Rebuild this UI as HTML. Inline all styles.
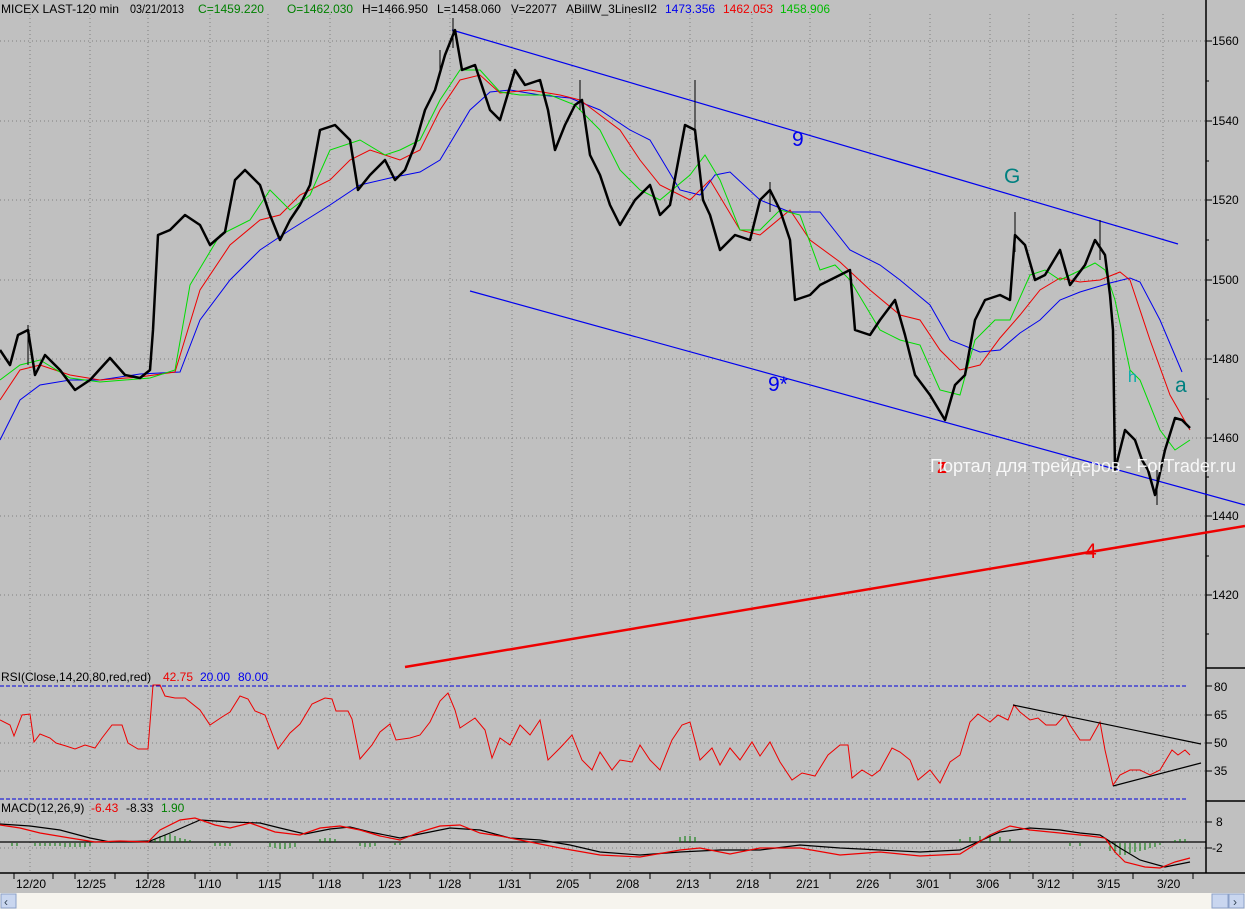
<!DOCTYPE html>
<html><head><meta charset="utf-8"><style>
html,body{margin:0;padding:0;background:#c0c0c0;}
#w{position:relative;width:1245px;height:909px;overflow:hidden;background:#c0c0c0;font-family:"Liberation Sans",sans-serif;}
svg text{font-family:"Liberation Sans","DejaVu Sans",sans-serif;}
</style></head><body><div id="w">
<svg width="1245" height="909" viewBox="0 0 1245 909" xmlns="http://www.w3.org/2000/svg">
<rect width="1245" height="909" fill="#c0c0c0"/>
<g stroke="#808080" stroke-dasharray="1,3" stroke-width="1">
<line x1="0" y1="41" x2="1206" y2="41"/><line x1="0" y1="121" x2="1206" y2="121"/><line x1="0" y1="200" x2="1206" y2="200"/><line x1="0" y1="280" x2="1206" y2="280"/><line x1="0" y1="359" x2="1206" y2="359"/><line x1="0" y1="438" x2="1206" y2="438"/><line x1="0" y1="516" x2="1206" y2="516"/><line x1="0" y1="595" x2="1206" y2="595"/>
<line x1="0" y1="715" x2="1206" y2="715"/><line x1="0" y1="743" x2="1206" y2="743"/><line x1="0" y1="771" x2="1206" y2="771"/>
<line x1="0" y1="822" x2="1206" y2="822"/><line x1="0" y1="848" x2="1206" y2="848"/>
<line x1="30" y1="14" x2="30" y2="873"/><line x1="90" y1="14" x2="90" y2="873"/><line x1="148" y1="14" x2="148" y2="873"/><line x1="210" y1="14" x2="210" y2="873"/><line x1="268" y1="14" x2="268" y2="873"/><line x1="330" y1="14" x2="330" y2="873"/><line x1="390" y1="14" x2="390" y2="873"/><line x1="450" y1="14" x2="450" y2="873"/><line x1="512" y1="14" x2="512" y2="873"/><line x1="572" y1="14" x2="572" y2="873"/><line x1="630" y1="14" x2="630" y2="873"/><line x1="690" y1="14" x2="690" y2="873"/><line x1="752" y1="14" x2="752" y2="873"/><line x1="810" y1="14" x2="810" y2="873"/><line x1="870" y1="14" x2="870" y2="873"/><line x1="930" y1="14" x2="930" y2="873"/><line x1="990" y1="14" x2="990" y2="873"/><line x1="1029" y1="14" x2="1029" y2="873"/><line x1="1073" y1="14" x2="1073" y2="873"/><line x1="1116" y1="14" x2="1116" y2="873"/><line x1="1163" y1="14" x2="1163" y2="873"/>
</g>
<g stroke="#000" stroke-width="1.5">
<line x1="1206" y1="0" x2="1206" y2="873"/>
<line x1="0" y1="873" x2="1245" y2="873"/>
<line x1="1206" y1="668" x2="1245" y2="668"/>
<line x1="1206" y1="801" x2="1245" y2="801"/>
</g>
<g stroke="#0000dd" stroke-dasharray="4,2" stroke-width="1">
<line x1="0" y1="686" x2="1188" y2="686"/><line x1="0" y1="799" x2="1188" y2="799"/>
</g>
<g font-size="12" fill="#000">
<text x="1212" y="45">1560</text><text x="1212" y="125">1540</text><text x="1212" y="204">1520</text><text x="1212" y="284">1500</text><text x="1212" y="363">1480</text><text x="1212" y="442">1460</text><text x="1212" y="520">1440</text><text x="1212" y="599">1420</text>
<text x="1214" y="691">80</text><text x="1214" y="719">65</text><text x="1214" y="747">50</text><text x="1214" y="775">35</text>
<text x="1216" y="826">8</text><text x="1212" y="852">-2</text>
</g>
<g stroke="#000" stroke-width="1">
<path d="M1206 41h6M1206 121h6M1206 200h6M1206 280h6M1206 359h6M1206 438h6M1206 516h6M1206 595h6M1206 81h3M1206 161h3M1206 240h3M1206 320h3M1206 399h3M1206 477h3M1206 556h3M1206 634h3M1206 686h6M1206 715h6M1206 743h6M1206 771h6M1206 822h6M1206 848h6"/>
</g>
<g font-size="12" fill="#000">
<text x="16" y="888">12/20</text><text x="76" y="888">12/25</text><text x="135" y="888">12/28</text><text x="198" y="888">1/10</text><text x="258" y="888">1/15</text><text x="318" y="888">1/18</text><text x="378" y="888">1/23</text><text x="438" y="888">1/28</text><text x="498" y="888">1/31</text><text x="556" y="888">2/05</text><text x="616" y="888">2/08</text><text x="676" y="888">2/13</text><text x="736" y="888">2/18</text><text x="796" y="888">2/21</text><text x="856" y="888">2/26</text><text x="916" y="888">3/01</text><text x="976" y="888">3/06</text><text x="1037" y="888">3/12</text><text x="1097" y="888">3/15</text><text x="1157" y="888">3/20</text>
</g>
<g stroke="#000" stroke-width="1"><path d="M14 873v6M53 873v6M75 873v6M115 873v6M148 873v6M195 873v6M237 873v6M280 873v6M313 873v6M363 873v6M410 873v6M430 873v6M470 873v6M530 873v6M590 873v6M650 873v6M710 873v6M770 873v6M830 873v6M890 873v6M950 873v6M1010 873v6M1033 873v6M1073 873v6M1133 873v6M1193 873v6"/></g>
<rect x="0" y="893" width="1245" height="16" fill="#f6f4ee"/>
<rect x="1" y="894" width="15" height="14" fill="#c9d6ef" stroke="#8aa0c8"/>
<text x="4" y="906" font-size="12" fill="#345">‹</text>
<rect x="1212" y="894" width="16" height="14" fill="#c9d6ef" stroke="#8aa0c8"/>
<rect x="1229" y="894" width="15" height="14" fill="#c9d6ef" stroke="#8aa0c8"/>
<text x="1233" y="906" font-size="12" fill="#345">›</text>
<g stroke="#0000ee" stroke-width="1.2" fill="none">
<line x1="452" y1="30" x2="1178" y2="244"/>
<line x1="470" y1="291" x2="1245" y2="505"/>
</g>
<line x1="405" y1="667" x2="1245" y2="526" stroke="#ee0000" stroke-width="2.5"/>
<polyline fill="none" stroke="#0000ee" stroke-width="1" points="0,440 20,400 40,385 70,380 100,380 140,374 180,372 200,320 230,280 260,250 290,230 330,205 360,185 390,178 420,172 440,160 455,135 470,110 490,92 510,90 540,95 570,98 600,110 630,130 650,140 680,190 700,195 715,175 730,172 760,200 790,212 820,212 850,250 880,265 900,280 930,305 950,340 980,352 1000,350 1020,333 1040,320 1060,300 1080,292 1110,283 1130,278 1140,282 1160,320 1182,372"/>
<polyline fill="none" stroke="#ee0000" stroke-width="1" points="0,400 20,370 40,365 70,375 100,380 140,377 175,372 200,290 230,245 260,220 280,215 300,195 330,180 350,160 370,150 400,160 420,150 440,110 460,80 480,75 500,93 530,90 560,95 580,100 600,115 620,130 640,160 660,185 690,200 710,180 740,230 760,235 790,210 810,240 840,262 870,290 900,315 920,320 940,350 960,370 980,365 1000,338 1020,315 1040,290 1060,278 1080,282 1100,280 1120,272 1130,280 1150,340 1170,395 1190,430"/>
<polyline fill="none" stroke="#00dd00" stroke-width="1" points="0,380 20,365 40,360 70,378 100,382 150,378 175,370 190,285 220,235 250,220 270,190 290,210 310,195 330,150 360,140 385,155 400,150 420,140 440,100 460,70 480,70 500,92 520,95 550,95 575,105 600,130 620,170 640,190 660,200 690,175 705,155 720,180 740,230 760,230 780,210 800,215 820,270 835,265 850,280 880,330 900,340 920,345 940,390 960,395 975,340 995,320 1010,320 1030,275 1045,270 1060,280 1085,268 1095,263 1105,270 1115,300 1130,370 1140,380 1160,430 1175,450 1190,440"/>
<polyline fill="none" stroke="#000" stroke-width="2.5" stroke-linejoin="round" points="0,350 10,365 18,335 28,330 35,375 45,355 60,370 75,390 90,380 110,358 125,375 140,378 150,370 153,330 158,235 170,230 185,215 200,225 210,245 225,232 235,180 245,170 260,185 270,215 280,240 290,220 300,205 310,185 320,130 335,125 350,140 358,190 370,175 385,160 395,180 405,170 415,145 425,110 435,90 445,55 455,30 462,70 475,65 490,110 500,120 515,70 525,85 540,80 548,110 555,150 565,125 575,105 582,100 590,155 600,175 610,205 620,225 635,200 650,185 660,215 670,205 685,125 695,130 703,200 710,215 720,250 735,235 750,240 760,200 770,190 780,210 790,240 795,300 810,295 820,285 830,280 850,270 855,330 870,335 880,320 895,300 905,335 915,375 930,395 945,420 955,385 965,375 975,320 985,300 1000,295 1010,300 1015,235 1025,245 1035,280 1045,275 1060,250 1070,285 1085,265 1095,240 1105,255 1110,295 1113,330 1115,470 1125,430 1135,440 1142,460 1148,470 1155,495 1165,450 1175,418 1182,420 1190,428"/>
<g stroke="#000" stroke-width="1"><path d="M453 18v30M695 80v60M1015 212v40M1100 220v40M1157 470v35M1113 325v10M28 325v40M440 50v20M580 80v30M770 182v30"/></g>
<text x="792" y="146" font-size="21" fill="#0000ee">9</text>
<text x="768" y="391" font-size="21" fill="#0000ee">9*</text>
<text x="1004" y="183" font-size="21" fill="#008080">G</text>
<text x="1128" y="382" font-size="16" fill="#00aaaa">h</text>
<text x="1175" y="392" font-size="21" fill="#008080">a</text>
<text x="937" y="473" font-size="20" fill="#ee0000" font-weight="bold">z</text>
<text x="1085" y="558" font-size="21" fill="#ee0000">4</text>
<text x="930" y="472" font-size="18" fill="#ffffff" opacity="0.9" textLength="306" lengthAdjust="spacingAndGlyphs">Портал для трейдеров - ForTrader.ru</text>
<text x="1" y="13" font-size="12" fill="#000" textLength="118" lengthAdjust="spacingAndGlyphs">MICEX LAST-120 min</text>
<text x="130" y="13" font-size="12" fill="#000" textLength="54" lengthAdjust="spacingAndGlyphs">03/21/2013</text>
<text x="198" y="13" font-size="12" fill="#008000" textLength="66" lengthAdjust="spacingAndGlyphs">C=1459.220</text>
<text x="287" y="13" font-size="12" fill="#008000" textLength="66" lengthAdjust="spacingAndGlyphs">O=1462.030</text>
<text x="362" y="13" font-size="12" fill="#000" textLength="66" lengthAdjust="spacingAndGlyphs">H=1466.950</text>
<text x="437" y="13" font-size="12" fill="#000" textLength="64" lengthAdjust="spacingAndGlyphs">L=1458.060</text>
<text x="511" y="13" font-size="12" fill="#000" textLength="46" lengthAdjust="spacingAndGlyphs">V=22077</text>
<text x="566" y="13" font-size="12" fill="#000" textLength="91" lengthAdjust="spacingAndGlyphs">ABillW_3LinesII2</text>
<text x="665" y="13" font-size="12" fill="#0000ee">1473.356</text>
<text x="723" y="13" font-size="12" fill="#ee0000">1462.053</text>
<text x="780" y="13" font-size="12" fill="#00bb00">1458.906</text>
<text x="1" y="681" font-size="12" fill="#000">RSI(Close,14,20,80,red,red)</text>
<text x="163" y="681" font-size="12" fill="#ee0000">42.75</text>
<text x="200" y="681" font-size="12" fill="#0000ee">20.00</text>
<text x="238" y="681" font-size="12" fill="#0000ee">80.00</text>
<text x="1" y="812" font-size="12" fill="#000">MACD(12,26,9)</text>
<text x="91" y="812" font-size="12" fill="#ee0000">-6.43</text>
<text x="126" y="812" font-size="12" fill="#000">-8.33</text>
<text x="161" y="812" font-size="12" fill="#008000">1.90</text>
<polyline fill="none" stroke="#ee0000" stroke-width="1" points="0,720 10,725 14,736 22,715 30,714 34,742 40,734 50,738 56,743 66,746 75,749 85,745 95,748 102,738 112,725 122,725 128,743 138,749 148,749 153,685 160,685 165,696 175,698 185,698 200,710 210,725 222,717 230,712 240,696 248,699 255,711 265,715 278,749 290,733 300,724 312,704 325,698 332,699 336,711 348,711 352,719 360,759 372,745 380,732 390,724 396,740 410,738 420,735 430,722 440,701 448,693 455,710 460,728 475,718 485,730 492,758 500,738 510,745 520,725 530,735 540,720 548,760 560,748 572,735 582,760 592,770 600,752 612,770 620,760 632,762 640,745 650,760 660,770 672,740 682,725 690,722 700,760 712,748 720,765 730,748 740,760 752,742 760,756 770,742 780,762 792,780 802,773 815,776 828,755 840,745 848,745 852,778 862,770 872,776 880,770 892,748 900,752 910,760 918,780 930,770 940,783 950,762 960,755 970,722 978,714 990,722 998,715 1008,720 1014,705 1020,712 1030,720 1038,718 1046,725 1056,725 1065,715 1070,725 1080,740 1090,740 1100,722 1105,750 1113,785 1120,775 1130,770 1140,770 1150,775 1160,770 1172,750 1178,755 1185,750 1190,755"/>
<g stroke="#000" stroke-width="1.2" fill="none"><line x1="1013" y1="705" x2="1201" y2="744"/><line x1="1113" y1="786" x2="1201" y2="763"/></g>
<line x1="0" y1="842" x2="1206" y2="842" stroke="#000" stroke-width="1.2"/>
<g stroke="#007700" stroke-width="1"><path d="M12 843v3M17 843v3M35 843v3M40 843v3M45 843v3M50 843v3M55 843v3M60 843v3M65 843v4M70 843v4M75 843v4M80 843v4M85 843v4M90 843v3M155 842v-3M160 842v-6M165 842v-7M170 842v-8M175 842v-6M180 842v-4M185 842v-3M190 842v-2M215 843v3M220 843v3M225 843v3M230 843v3M270 843v4M275 843v5M280 843v6M285 843v6M290 843v5M295 843v4M320 842v-3M325 842v-4M330 842v-4M335 842v-3M360 843v3M365 843v4M370 843v4M375 843v3M395 843v2M400 843v2M680 842v-5M685 842v-6M690 842v-6M695 842v-5M960 842v-3M970 842v-5M980 842v-6M990 842v-6M1000 842v-5M1010 842v-3M1070 843v3M1080 843v3M1110 843v8M1115 843v10M1120 843v12M1125 843v12M1130 843v10M1135 843v9M1140 843v8M1145 843v7M1150 843v5M1155 843v4M1160 843v2M1175 842v-2M1180 842v-3M1185 842v-3"/></g>
<polyline fill="none" stroke="#000" stroke-width="1.2" points="0,824 30,826 60,830 90,838 110,842 150,841 170,833 200,820 230,822 260,823 280,828 305,834 330,829 350,827 370,832 400,838 420,834 450,828 480,830 510,838 540,840 570,845 600,852 640,855 680,852 720,850 760,850 800,845 840,848 880,850 920,852 960,850 1000,832 1030,828 1060,830 1080,833 1100,835 1120,848 1140,860 1165,867 1190,862"/>
<polyline fill="none" stroke="#ee0000" stroke-width="1.2" points="0,825 20,828 40,833 70,838 95,842 120,841 148,842 160,830 180,820 195,818 215,825 230,828 250,823 275,832 300,835 320,828 340,826 360,830 380,836 400,840 420,832 440,826 460,825 480,833 500,836 530,842 560,848 600,855 640,857 680,850 700,848 730,854 760,848 800,848 840,855 880,852 920,856 960,854 990,835 1010,826 1030,830 1060,833 1090,836 1105,838 1115,852 1125,862 1145,867 1160,868 1175,862 1190,858"/>
</svg>
</div></body></html>
